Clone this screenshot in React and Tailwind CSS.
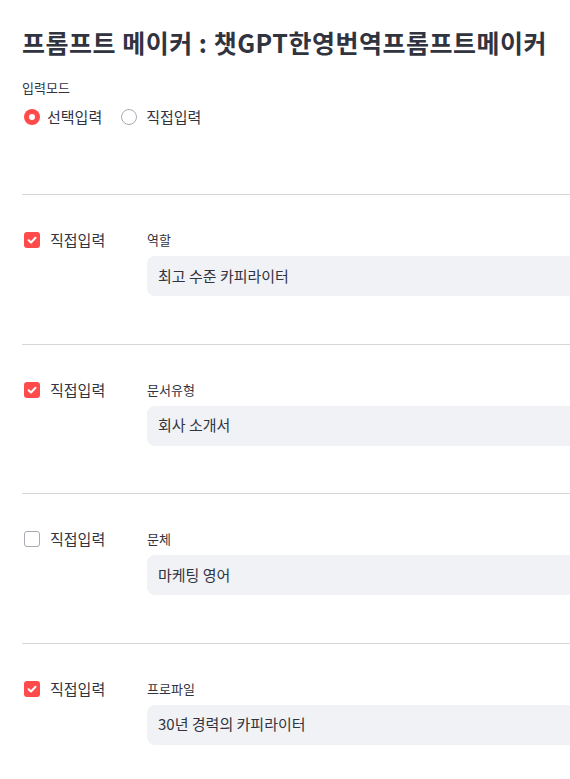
import React from "react";

const font = { fontFamily: '"Noto Sans CJK KR", "Noto Sans", sans-serif' };

function Checkbox({ checked }) {
  if (checked) {
    return (
      <span className="flex h-4 w-4 items-center justify-center rounded-[3px] bg-[#ff4b4b]">
        <svg width="12" height="12" viewBox="0 0 12 12" fill="none">
          <path d="M2.6 6.2 L5 8.5 L9.5 3.8" stroke="white" strokeWidth="2" strokeLinecap="round" strokeLinejoin="round" />
        </svg>
      </span>
    );
  }
  return <span className="block h-4 w-4 rounded-[3px] border border-[#a8abb5] bg-white" />;
}

function Section({ checked, label, value }) {
  return (
    <div className="border-t border-[#d6d6d9] pt-[35px] pb-[47.5px]">
      <div className="flex items-start">
        <div className="flex w-[125px] items-center h-[20px]">
          <span className="ml-[2px]"><Checkbox checked={checked} /></span>
          <span className="ml-[10px] text-[15px] leading-[20px] text-[#31333f]">직접입력</span>
        </div>
        <div className="flex-1">
          <div className="h-[20px] text-[13px] leading-[20px] text-[#31333f]">{label}</div>
          <div className="mt-[6px] flex h-[40px] items-center rounded-[8px] bg-[#f0f2f6] pl-[11px] text-[15px] text-[#31333f]">
            {value}
          </div>
        </div>
      </div>
    </div>
  );
}

export default function App() {
  return (
    <div className="w-full overflow-hidden bg-white" style={font}>
      <div className="w-[760px] pl-[22px] pt-[26px]">
        <h1 className="h-[32px] text-[25px] font-bold leading-[32px] tracking-[0.5px] text-[#31333f]">
          프롬프트 메이커 : 챗GPT한영번역프롬프트메이커
        </h1>
        <div className="mt-[20px] h-[20px] text-[13px] leading-[20px] text-[#31333f]">입력모드</div>
        <div className="mt-[9px] flex h-[20px] items-center">
          <span className="ml-[2px] flex h-4 w-4 items-center justify-center rounded-full bg-[#ff4b4b]">
            <span className="h-[6px] w-[6px] rounded-full bg-white" />
          </span>
          <span className="ml-[7px] text-[15px] leading-[20px] text-[#31333f]">선택입력</span>
          <span className="ml-[19px] block h-4 w-4 rounded-full border border-[#a8abb5]" />
          <span className="ml-[9px] text-[15px] leading-[20px] text-[#31333f]">직접입력</span>
        </div>
        <div className="mt-[67px]">
          <Section checked label="역할" value="최고 수준 카피라이터" />
          <Section checked label="문서유형" value="회사 소개서" />
          <Section checked={false} label="문체" value="마케팅 영어" />
          <Section checked label="프로파일" value="30년 경력의 카피라이터" />
        </div>
      </div>
    </div>
  );
}
